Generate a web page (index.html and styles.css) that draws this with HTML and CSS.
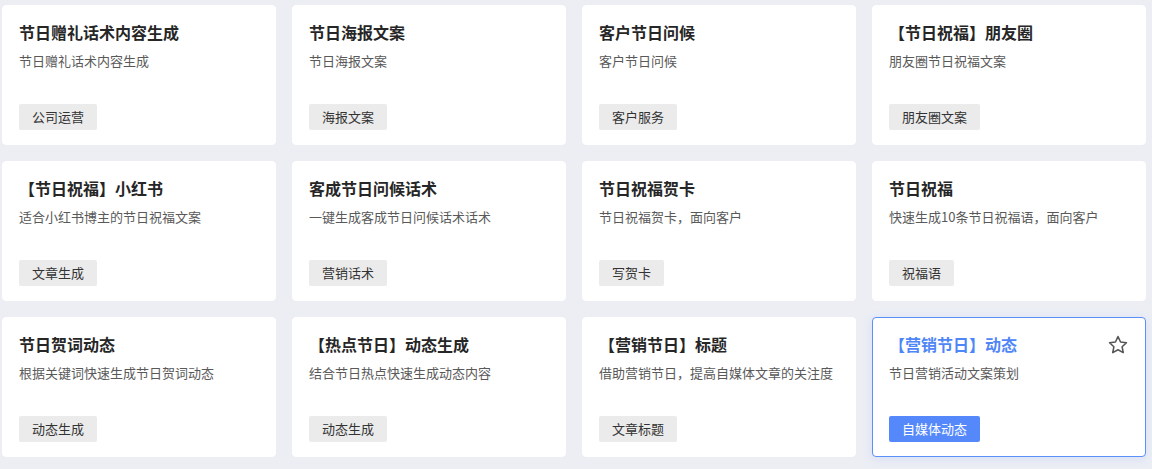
FILE: index.html
```html
<!DOCTYPE html>
<html>
  <head>
    <title>节日模板</title>
    <link rel="stylesheet" href="styles.css">
  </head>
  <body>
    <div class="grid">
      <div class="card">
        <h3>节日赠礼话术内容生成</h3>
        <p>节日赠礼话术内容生成</p>
        <span class="tag">公司运营</span>
      </div>
      <div class="card">
        <h3>节日海报文案</h3>
        <p>节日海报文案</p>
        <span class="tag">海报文案</span>
      </div>
      <div class="card">
        <h3>客户节日问候</h3>
        <p>客户节日问候</p>
        <span class="tag">客户服务</span>
      </div>
      <div class="card">
        <h3>【节日祝福】朋友圈</h3>
        <p>朋友圈节日祝福文案</p>
        <span class="tag">朋友圈文案</span>
      </div>

      <div class="card">
        <h3>【节日祝福】小红书</h3>
        <p>适合小红书博主的节日祝福文案</p>
        <span class="tag">文章生成</span>
      </div>
      <div class="card">
        <h3>客成节日问候话术</h3>
        <p>一键生成客成节日问候话术话术</p>
        <span class="tag">营销话术</span>
      </div>
      <div class="card">
        <h3>节日祝福贺卡</h3>
        <p>节日祝福贺卡，面向客户</p>
        <span class="tag">写贺卡</span>
      </div>
      <div class="card">
        <h3>节日祝福</h3>
        <p>快速生成10条节日祝福语，面向客户</p>
        <span class="tag">祝福语</span>
      </div>

      <div class="card">
        <h3>节日贺词动态</h3>
        <p>根据关键词快速生成节日贺词动态</p>
        <span class="tag">动态生成</span>
      </div>
      <div class="card">
        <h3>【热点节日】动态生成</h3>
        <p>结合节日热点快速生成动态内容</p>
        <span class="tag">动态生成</span>
      </div>
      <div class="card">
        <h3>【营销节日】标题</h3>
        <p>借助营销节日，提高自媒体文章的关注度</p>
        <span class="tag">文章标题</span>
      </div>
      <div class="card active">
        <h3>【营销节日】动态</h3>
        <p>节日营销活动文案策划</p>
        <span class="tag">自媒体动态</span>
        <svg class="star" width="22" height="22" viewBox="0 0 24 24">
          <path d="M12 2.8l2.8 5.9 6.4.8-4.7 4.4 1.2 6.4L12 17.2l-5.7 3.1 1.2-6.4-4.7-4.4 6.4-.8z"
            fill="none" stroke="#555" stroke-width="1.7" stroke-linejoin="round" />
        </svg>
      </div>
    </div>
  </body>
</html>
```

FILE: styles.css
```css
body {
  margin: 0;
  padding: 5px 6px 12px 2px;
  background: #eceef4;
  font-family: "Noto Sans CJK SC", "Microsoft YaHei", sans-serif;
}
.grid {
  display: grid;
  grid-template-columns: repeat(4, 274px);
  gap: 16px;
}
.card {
  position: relative;
  box-sizing: border-box;
  height: 140px;
  background: #fff;
  border: 1px solid #fff;
  border-radius: 4px;
  padding: 14px 16px 14px;
  display: flex;
  flex-direction: column;
  align-items: flex-start;
}
.card h3 {
  margin: 0;
  font-size: 16px;
  line-height: 24px;
  font-weight: bold;
  color: #262626;
}
.card p {
  margin: 7px 0 0;
  font-size: 13px;
  line-height: 20px;
  color: #595959;
}
.tag {
  margin-top: auto;
  height: 26px;
  line-height: 26px;
  padding: 0 13px;
  font-size: 13px;
  color: #333;
  background: #ebebeb;
  border-radius: 2px;
}
.card.active {
  border-color: #5b8ff9;
  box-shadow: 0 2px 10px rgba(91, 143, 249, 0.15);
}
.card.active h3 {
  color: #4f86f7;
}
.card.active .tag {
  background: #5589fb;
  color: #fff;
}
.star {
  position: absolute;
  top: 16px;
  right: 16px;
}
```
